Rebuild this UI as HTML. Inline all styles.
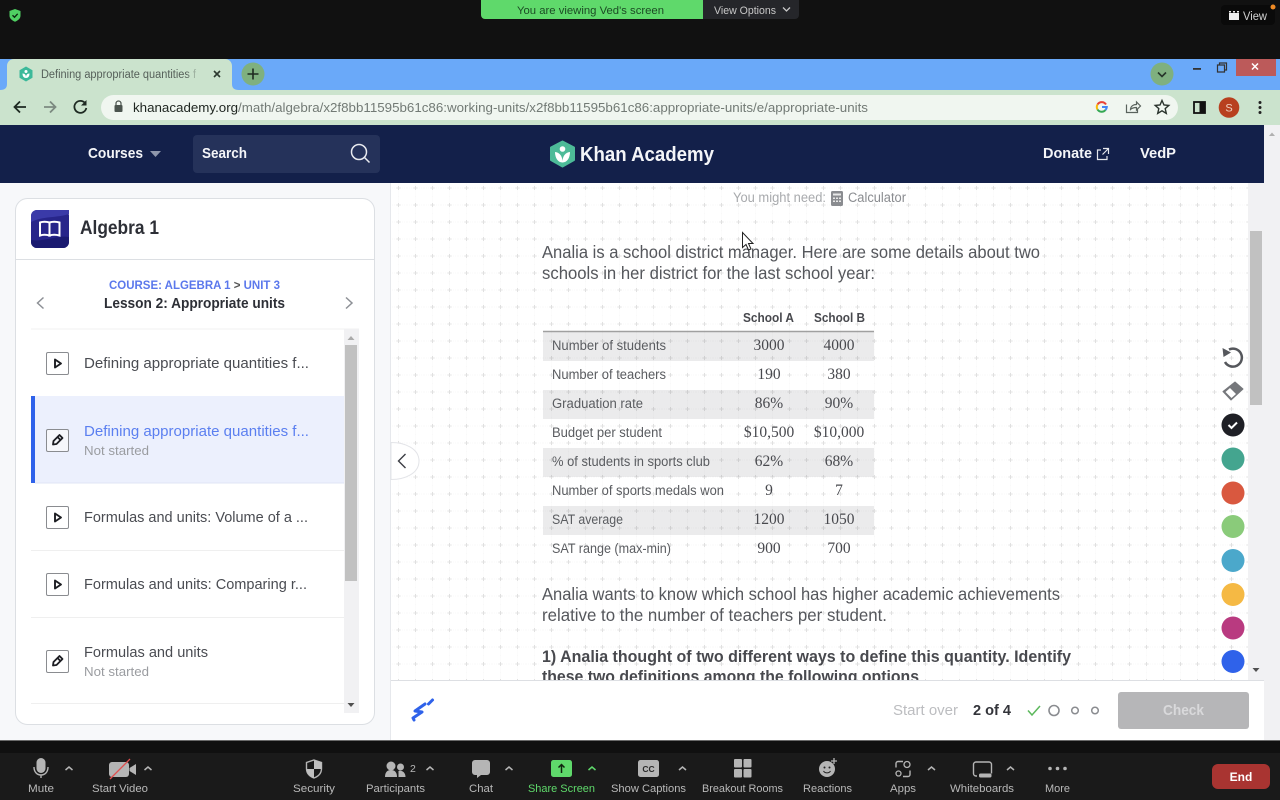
<!DOCTYPE html>
<html><head><meta charset="utf-8"><title>Khan Academy</title>
<style>
html,body{margin:0;padding:0;background:#111;width:1280px;height:800px;overflow:hidden}
svg{display:block;filter:blur(.35px)}
text{font-family:"Liberation Sans",sans-serif;white-space:pre}
.s{font-family:"Liberation Serif",serif}
.z{font-size:11px;fill:#b9b9b9}
.c{font-size:10px;fill:none;stroke:#b5b5b5;stroke-width:1.5}
.i{fill:none;stroke:#3a3c42;stroke-width:1.4}
</style></head><body>
<svg width="1280" height="800" viewBox="0 0 1280 800" xmlns="http://www.w3.org/2000/svg">
<defs>
<pattern id="g" x="390" y="179.5" width="17" height="17" patternUnits="userSpaceOnUse">
<path d="M0 8.500H17M8.500 0V17" stroke="#000" stroke-opacity=".025" stroke-width="1" stroke-dasharray="1 1"/>
<path d="M6.500 8.500H10.500M8.500 6.500V10.500" stroke="#000" stroke-opacity=".11" stroke-width="1"/>
</pattern>
<clipPath id="pc"><rect x="391" y="183" width="859" height="497"/></clipPath>
<linearGradient id="f" x1="0" x2="1"><stop offset="0" stop-color="#cbe3cd" stop-opacity="0"/><stop offset="1" stop-color="#cbe3cd"/></linearGradient>
</defs>

<!-- top zoom bar -->
<rect width="1280" height="59" fill="#111"/>
<path d="M15 9l5.500 2v4.500c0 3-2.400 5-5.500 6.200c-3.100-1.200-5.500-3.200-5.500-6.200V11z" fill="#4fd062"/>
<path d="M12.500 15.200l2 2 3.200-3.400" fill="none" stroke="#0b2a10" stroke-width="1.400"/>
<path d="M481 0H703V19H485a4 4 0 0 1-4-4z" fill="#5fd96b"/>
<text x="517" y="14" font-size="11" fill="#1c4a24" textLength="147" lengthAdjust="spacingAndGlyphs">You are viewing Ved's screen</text>
<path d="M703 0H799V15a4 4 0 0 1-4 4H703z" fill="#25262a"/>
<text x="714" y="14" font-size="11" fill="#c8c8c8" textLength="62" lengthAdjust="spacingAndGlyphs">View Options</text>
<path d="M783 7.500l3.500 3.500 3.500-3.500" fill="none" stroke="#c8c8c8" stroke-width="1.300"/>
<rect x="1221" y="5" width="54" height="20" rx="4" fill="#0a0a0a"/>
<path d="M1229 13h10v7h-10z" fill="#eee"/><path d="M1229 11h2v1.500h-2zM1233 11h2v1.500h-2zM1237 11h2v1.500h-2z" fill="#eee"/>
<text x="1243" y="20" font-size="11.500" fill="#d0d0d0" textLength="24" lengthAdjust="spacingAndGlyphs">View</text>
<circle cx="1273" cy="7" r="2.500" fill="#f08a24"/>

<!-- tab strip -->
<rect y="59" width="1280" height="31" fill="#6aa9f9"/>
<path d="M0 90c5 0 7-2 7-6V66c0-4 3-7 7-7H225c4 0 7 3 7 7v18c0 4 2 6 7 6z" fill="#cbe3cd"/>
<path d="M26 67l6 3.500v7L26 81l-6-3.500v-7z" fill="#3cb99a" stroke="#3cb99a" stroke-linejoin="round"/>
<circle cx="26" cy="71.500" r="1.500" fill="#fff"/><path d="M22.500 73.500c2.500 0 3.500 1.500 3.500 4c0-2.500 1-4 3.500-4c0 3-1.500 4.500-3.500 4.500s-3.500-1.500-3.500-4.500z" fill="#fff"/>
<text x="41" y="78" font-size="11.500" fill="#56605a" textLength="155" lengthAdjust="spacingAndGlyphs">Defining appropriate quantities f</text>
<rect x="186" y="66" width="14" height="16" fill="url(#f)"/>
<path d="M214 71l6 6M220 71l-6 6" stroke="#2d3a30" stroke-width="1.600"/>
<circle cx="253" cy="74" r="11.500" fill="#7fb07f"/>
<path d="M247.500 74h11M253 68.500v11" stroke="#1e2a20" stroke-width="1.600"/>
<circle cx="1162" cy="74" r="11.500" fill="#7fb07f"/>
<path d="M1158 72.500l4 4 4-4" fill="none" stroke="#26352a" stroke-width="1.600"/>
<rect x="1193" y="68" width="8" height="1.800" fill="#333"/>
<path d="M1217.500 65h7v7h-7zM1219.500 65v-2h7v7h-2" fill="none" stroke="#333" stroke-width="1.200"/>
<rect x="1236" y="59" width="40" height="17" fill="#bc5a5a"/>
<path d="M1252 63.500l6 6M1258 63.500l-6 6" stroke="#fff" stroke-width="1.500"/>

<!-- toolbar -->
<rect y="90" width="1280" height="35" fill="#cbe3cd"/>
<path d="M26 107H14.500M20 101.500L14.500 107l5.500 5.500" fill="none" stroke="#1e2a22" stroke-width="1.800"/>
<path d="M44 107h11.500M50 101.500l5.500 5.500-5.500 5.500" fill="none" stroke="#7c8a80" stroke-width="1.800"/>
<path d="M85 103a6 6 0 1 0 1.300 5" fill="none" stroke="#1e2a22" stroke-width="1.800"/><path d="M86.500 100v5.500H81z" fill="#1e2a22"/>
<rect x="101" y="95" width="1077" height="25" rx="12.500" fill="#f0f6f0"/>
<rect x="114.500" y="105" width="8" height="7" rx="1" fill="#4b544e"/><path d="M116 105v-1.500a2.500 2.500 0 0 1 5 0v1.500" fill="none" stroke="#4b544e" stroke-width="1.200"/>
<text x="133" y="112" font-size="13" fill="#727a75" textLength="735" lengthAdjust="spacingAndGlyphs"><tspan fill="#202722">khanacademy.org</tspan>/math/algebra/x2f8bb11595b61c86:working-units/x2f8bb11595b61c86:appropriate-units/e/appropriate-units</text>
<g fill="none" stroke-width="2">
<path d="M1106 104.500a5 5 0 0 0-8.500 0" stroke="#e94235"/><path d="M1097.500 104.500a5 5 0 0 0 0 5" stroke="#fabb05"/><path d="M1097.500 109.500a5 5 0 0 0 8 .5" stroke="#34a853"/><path d="M1105.500 110a5 5 0 0 0 1.300-3H1102" stroke="#4285f4"/>
</g>
<path d="M1126.500 104.500v8h11v-4M1130.500 109c.5-3 3-4.500 6-4.500v-2.500l4 4-4 4v-2.500c-2.500 0-4.500.5-6 2z" fill="none" stroke="#5a635d" stroke-width="1.200"/>
<path d="M1162 100.500l2 4.500 4.800.4-3.600 3.200 1.100 4.800-4.300-2.600-4.300 2.600 1.100-4.800-3.600-3.200 4.800-.4z" fill="none" stroke="#2a332d" stroke-width="1.400"/>
<rect x="1194" y="102" width="11" height="11" fill="none" stroke="#111" stroke-width="1.800"/><rect x="1199.500" y="102" width="5.500" height="11" fill="#111"/>
<circle cx="1229" cy="107.500" r="10.300" fill="#b8401f"/>
<text x="1229" y="111.500" font-size="11" fill="#f0d0c0" text-anchor="middle">S</text>
<circle cx="1260" cy="102.500" r="1.500" fill="#222"/><circle cx="1260" cy="107.500" r="1.500" fill="#222"/><circle cx="1260" cy="112.500" r="1.500" fill="#222"/>

<!-- page background -->
<rect y="125" width="1280" height="615" fill="#f7f8fa"/>
<rect x="1264" y="125" width="16" height="615" fill="#f1f1f3"/>
<path d="M1269 136l3-3.500 3 3.500z" fill="#b0b0b0"/>

<!-- KA nav -->
<rect y="125" width="1264" height="58" fill="#13204a"/>
<text x="88" y="158" font-size="15" font-weight="700" fill="#f4f5f8" textLength="55" lengthAdjust="spacingAndGlyphs">Courses</text>
<path d="M150 151h11l-5.500 6z" fill="#8f97ac"/>
<rect x="193" y="135" width="187" height="38" rx="4" fill="#25325a"/>
<text x="202" y="158" font-size="15" font-weight="700" fill="#f4f5f8" textLength="45" lengthAdjust="spacingAndGlyphs">Search</text>
<circle cx="359" cy="152" r="7.500" fill="none" stroke="#e9ebf0" stroke-width="1.500"/><path d="M364.500 157.500l5 5" stroke="#e9ebf0" stroke-width="1.500"/>
<path d="M562.500 141.500l11.500 6v12.500l-11.500 6.500-11.500-6.500V147.500z" fill="#4dbb98" stroke="#4dbb98" stroke-width="2" stroke-linejoin="round"/>
<circle cx="562.500" cy="149" r="2.800" fill="#fff"/>
<path d="M555 152c4 .5 7 3 7.500 9c.5-6 3.500-8.500 7.500-9c0 6-3 10.500-7.500 10.500S555 158 555 152z" fill="#fff"/>
<text x="580" y="161" font-size="20.500" font-weight="700" fill="#f4f5f8" textLength="134" lengthAdjust="spacingAndGlyphs">Khan Academy</text>
<text x="1043" y="158" font-size="15" font-weight="700" fill="#f4f5f8" textLength="49" lengthAdjust="spacingAndGlyphs">Donate</text>
<path d="M1101 150h-3.500v9.500h9.500V156M1103 148.500h5.500v5.500M1108.500 148.500l-6 6" fill="none" stroke="#e4e6ec" stroke-width="1.200"/>
<text x="1140" y="158" font-size="15" font-weight="700" fill="#f4f5f8" textLength="36" lengthAdjust="spacingAndGlyphs">VedP</text>

<!-- sidebar card -->
<rect x="15.500" y="198.500" width="359" height="526" rx="12" fill="#fff" stroke="#dcdfe3"/>
<path d="M16 259.500H374" stroke="#dcdfe3"/>
<rect x="31" y="210" width="38" height="38" rx="6" fill="#27258a"/>
<path d="M31 222c12-6 26-4 38-8v-4H37a6 6 0 0 0-6 6z" fill="#3a3aa8"/>
<path d="M31 240c14 2 26-5 38-3v5a6 6 0 0 1-6 6H37a6 6 0 0 1-6-6z" fill="#1a1a70"/>
<path d="M40 222.500c3-1 6-1 9.500 0v13c-3.500-1-6.500-1-9.500 0zM49.500 222.500c3-1 6.500-1 10 0v13c-3.500-1-7-1-10 0z" fill="#27258a" stroke="#fff" stroke-width="2"/>
<text x="80" y="234" font-size="19" font-weight="700" fill="#2d2f36" textLength="79" lengthAdjust="spacingAndGlyphs">Algebra 1</text>
<text x="109" y="289" font-size="11.500" font-weight="700" fill="#5b78ec" textLength="171" lengthAdjust="spacingAndGlyphs">COURSE: ALGEBRA 1 <tspan fill="#555">&gt;</tspan> UNIT 3</text>
<text x="104" y="308" font-size="14.500" font-weight="700" fill="#2d2f36" textLength="181" lengthAdjust="spacingAndGlyphs">Lesson 2: Appropriate units</text>
<path d="M43.500 297.500l-6 5.500 6 5.500M346 297.500l6 5.500-6 5.500" fill="none" stroke="#8d9096" stroke-width="1.500"/>

<path d="M31 329H359" stroke="#f2f2f2"/>
<rect x="344" y="329" width="15" height="384" fill="#f1f1f3"/>
<rect x="345" y="345" width="12" height="236" fill="#c1c1c1"/>
<path d="M347.500 340l3.500-4 3.500 4z" fill="#aaa"/><path d="M347.500 703h7l-3.500 4z" fill="#505050"/>

<rect x="31" y="396" width="313" height="87" fill="#ecf0fd"/>
<rect x="31" y="396" width="4" height="87" fill="#2f62ea"/>
<path d="M35 483H344" stroke="#dfe5f5"/>
<path d="M31 550.500H344M31 617.500H344M31 703.500H344" stroke="#efefef"/>

<g class="i">
<rect x="46.500" y="352.500" width="22" height="22" rx="1.500" fill="#fff" stroke="#8a8c90" stroke-width="1"/>
<rect x="46.500" y="429.500" width="22" height="22" rx="1.500" fill="#f6f7fb" stroke="#8a8c90" stroke-width="1"/>
<rect x="46.500" y="506.500" width="22" height="22" rx="1.500" fill="#fff" stroke="#8a8c90" stroke-width="1"/>
<rect x="46.500" y="573.500" width="22" height="22" rx="1.500" fill="#fff" stroke="#8a8c90" stroke-width="1"/>
<rect x="46.500" y="650.500" width="22" height="22" rx="1.500" fill="#fff" stroke="#8a8c90" stroke-width="1"/>
</g>
<g fill="none" stroke="#1c1d22" stroke-width="1.900" stroke-linejoin="round">
<path d="M55 359.500l6 4-6 4z"/><path d="M55 513.500l6 4-6 4z"/><path d="M55 580.500l6 4-6 4z"/>
</g>
<g fill="none" stroke="#1c1d22" stroke-width="1.800" stroke-linejoin="round">
<path d="M53.500 441l6-6 3 3-6 6-3.500.5z"/><path d="M57.500 437l3 3"/>
<path d="M53.500 662l6-6 3 3-6 6-3.500.5z"/><path d="M57.500 658l3 3"/>
</g>
<g font-size="15" fill="#4a4c52">
<text x="84" y="368" textLength="225" lengthAdjust="spacingAndGlyphs">Defining appropriate quantities f...</text>
<text x="84" y="436" textLength="225" lengthAdjust="spacingAndGlyphs" fill="#5b7ff0">Defining appropriate quantities f...</text>
<text x="84" y="522" textLength="224" lengthAdjust="spacingAndGlyphs">Formulas and units: Volume of a ...</text>
<text x="84" y="589" textLength="223" lengthAdjust="spacingAndGlyphs">Formulas and units: Comparing r...</text>
<text x="84" y="657" textLength="124" lengthAdjust="spacingAndGlyphs">Formulas and units</text>
</g>
<text x="84" y="455" font-size="13" fill="#9a9ca0" textLength="65" lengthAdjust="spacingAndGlyphs">Not started</text>
<text x="84" y="676" font-size="13" fill="#9a9ca0" textLength="65" lengthAdjust="spacingAndGlyphs">Not started</text>

<!-- content -->
<rect x="391" y="183" width="859" height="497" fill="#fff"/>
<g fill="#ebebec"><rect x="543" y="332" width="331" height="29"/><rect x="543" y="390" width="331" height="29"/><rect x="543" y="448" width="331" height="29"/><rect x="543" y="506" width="331" height="29"/></g>
<rect x="391" y="183" width="857" height="497" fill="url(#g)"/>
<path d="M390.500 183V740" stroke="#e6e8ec"/>
<rect x="1248" y="183" width="16" height="497" fill="#f1f1f3"/>
<rect x="1250" y="231" width="12" height="174" fill="#c1c1c1"/>
<path d="M1252.500 668h7l-3.500 4z" fill="#505050"/>

<g clip-path="url(#pc)">
<text x="733" y="202" font-size="13.500" fill="#a8aaad" textLength="93" lengthAdjust="spacingAndGlyphs">You might need:</text>
<rect x="831" y="191" width="12" height="15" rx="1.500" fill="#8a8c90"/>
<path d="M833 193.500h8v2h-8zM833 197.500h2v1.500h-2zM836 197.500h2v1.500h-2zM839 197.500h2v1.500h-2zM833 200.500h2v1.500h-2zM836 200.500h2v1.500h-2zM839 200.500h2v1.500h-2z" fill="#e8e8e8"/>
<text x="848" y="202" font-size="13.500" fill="#8a8c90" textLength="58" lengthAdjust="spacingAndGlyphs">Calculator</text>

<g font-size="17.500" fill="#55575c">
<text x="542" y="258" textLength="498" lengthAdjust="spacingAndGlyphs">Analia is a school district manager. Here are some details about two</text>
<text x="542" y="279" textLength="333" lengthAdjust="spacingAndGlyphs">schools in her district for the last school year:</text>
<text x="542" y="600" textLength="518" lengthAdjust="spacingAndGlyphs">Analia wants to know which school has higher academic achievements</text>
<text x="542" y="621" textLength="345" lengthAdjust="spacingAndGlyphs">relative to the number of teachers per student.</text>
</g>
<g font-size="17" font-weight="700" fill="#48494e">
<text x="542" y="662" textLength="529" lengthAdjust="spacingAndGlyphs">1) Analia thought of two different ways to define this quantity. Identify</text>
<text x="542" y="682" textLength="377" lengthAdjust="spacingAndGlyphs">these two definitions among the following options</text>
</g>

<text x="743" y="322" font-size="13" font-weight="700" fill="#48494e" textLength="51" lengthAdjust="spacingAndGlyphs">School A</text>
<text x="814" y="322" font-size="13" font-weight="700" fill="#48494e" textLength="51" lengthAdjust="spacingAndGlyphs">School B</text>
<path d="M543 331.500H874" stroke="#a0a0a0" stroke-width="1.500"/>
<g font-size="13.500" fill="#5a5c60">
<text x="552" y="350" textLength="114" lengthAdjust="spacingAndGlyphs">Number of students</text>
<text x="552" y="379" textLength="114" lengthAdjust="spacingAndGlyphs">Number of teachers</text>
<text x="552" y="408" textLength="91" lengthAdjust="spacingAndGlyphs">Graduation rate</text>
<text x="552" y="437" textLength="110" lengthAdjust="spacingAndGlyphs">Budget per student</text>
<text x="552" y="466" textLength="158" lengthAdjust="spacingAndGlyphs">% of students in sports club</text>
<text x="552" y="495" textLength="172" lengthAdjust="spacingAndGlyphs">Number of sports medals won</text>
<text x="552" y="524" textLength="71" lengthAdjust="spacingAndGlyphs">SAT average</text>
<text x="552" y="553" textLength="119" lengthAdjust="spacingAndGlyphs">SAT range (max-min)</text>
</g>
<g class="s" font-size="15.500" fill="#48494e" text-anchor="middle">
<text class="s" x="769" y="350">3000</text><text class="s" x="839" y="350">4000</text>
<text class="s" x="769" y="379">190</text><text class="s" x="839" y="379">380</text>
<text class="s" x="769" y="408">86%</text><text class="s" x="839" y="408">90%</text>
<text class="s" x="769" y="437">$10,500</text><text class="s" x="839" y="437">$10,000</text>
<text class="s" x="769" y="466">62%</text><text class="s" x="839" y="466">68%</text>
<text class="s" x="769" y="495">9</text><text class="s" x="839" y="495">7</text>
<text class="s" x="769" y="524">1200</text><text class="s" x="839" y="524">1050</text>
<text class="s" x="769" y="553">900</text><text class="s" x="839" y="553">700</text>
</g>
</g>

<!-- cursor -->
<path d="M742.500 232.500v15l3.500-3 2.500 5.500 2.500-1-2.500-5.500h4.500z" fill="#fff" stroke="#222" stroke-width="1"/>

<!-- tools -->
<path d="M1229 349.500A9 9 0 1 1 1225 362" fill="none" stroke="#55575c" stroke-width="2.500"/>
<path d="M1222.500 348l1 9 7.500-4.500z" fill="#55575c"/>
<path d="M1223 391.500l12-9.500 8 7-12 11z" fill="#75777b" stroke="#75777b" stroke-linejoin="round"/>
<path d="M1225.500 392l4.500-4 6 6-4.500 4z" fill="#fff"/>
<circle cx="1233" cy="425" r="11.500" fill="#1f2026"/>
<path d="M1228.500 425l3 3 5.500-5.500" fill="none" stroke="#fff" stroke-width="2"/>
<circle cx="1233" cy="459" r="11.500" fill="#44a58f"/>
<circle cx="1233" cy="493" r="11.500" fill="#d9583f"/>
<circle cx="1233" cy="526.500" r="11.500" fill="#8acb7a"/>
<circle cx="1233" cy="560.500" r="11.500" fill="#4ba8cb"/>
<circle cx="1233" cy="594.500" r="11.500" fill="#f5b944"/>
<circle cx="1233" cy="628" r="11.500" fill="#b93a80"/>
<circle cx="1233" cy="661.500" r="11.500" fill="#2f62ea"/>

<!-- collapse -->
<path d="M391 442.500c14 0 28 6 28 18.500s-14 18.500-28 18.500z" fill="#fff" stroke="#e3e4e8"/>
<path d="M405.500 454l-7 7 7 7" fill="none" stroke="#3a3c42" stroke-width="1.400"/>

<!-- footer -->
<rect x="391" y="680" width="873" height="60" fill="#fff"/>
<path d="M391 680.500H1264" stroke="#dddfe3"/>
<path d="M414 720l-1-2 9-6-7-1 10-7" fill="none" stroke="#2f62ea" stroke-width="3" stroke-linecap="round" stroke-linejoin="round"/>
<path d="M428.500 704l4-4" stroke="#2f62ea" stroke-width="3" stroke-linecap="round"/>
<text x="893" y="715" font-size="15" font-weight="400" fill="#bcbdc0" textLength="65" lengthAdjust="spacingAndGlyphs">Start over</text>
<text x="973" y="715" font-size="15" font-weight="700" fill="#33343a" textLength="38" lengthAdjust="spacingAndGlyphs">2 of 4</text>
<path d="M1028 710.500l4 4.500 8-9" fill="none" stroke="#5cb85c" stroke-width="1.500"/>
<circle cx="1054" cy="710.500" r="5" fill="none" stroke="#8a8c90" stroke-width="1.600"/>
<circle cx="1075" cy="710.500" r="3.300" fill="none" stroke="#8a8c90" stroke-width="1.500"/>
<circle cx="1095" cy="710.500" r="3.300" fill="none" stroke="#8a8c90" stroke-width="1.500"/>
<rect x="1118" y="692" width="131" height="37" rx="3" fill="#b6b6b8"/>
<text x="1163" y="715" font-size="15" font-weight="700" fill="#d9d9db" textLength="41" lengthAdjust="spacingAndGlyphs">Check</text>

<!-- zoom toolbar -->
<rect y="740" width="1280" height="60" fill="#1a1a1a"/>
<rect y="741" width="1280" height="12" fill="#101010"/>
<rect y="740" width="1280" height="1" fill="#6a6a6a"/>

<rect x="36.500" y="758" width="9" height="15" rx="4.500" fill="#b5b5b5"/>
<path d="M34 767c0 5 3 8 7 8s7-3 7-8M41 775v3" fill="none" stroke="#b5b5b5" stroke-width="1.400"/>
<path d="M65.500 770l3.500-3 3.500 3" class="c"/>
<text class="z" x="28" y="792" textLength="26" lengthAdjust="spacingAndGlyphs">Mute</text>

<rect x="109" y="762" width="20" height="15" rx="3" fill="#b5b5b5"/>
<path d="M129.500 768l6.500-4v11l-6.500-4z" fill="#b5b5b5"/>
<path d="M110 779l20-20" stroke="#e05050" stroke-width="1.300"/>
<path d="M144.500 770l3.500-3 3.500 3" class="c"/>
<text class="z" x="92" y="792" textLength="56" lengthAdjust="spacingAndGlyphs">Start Video</text>

<path d="M314 760l7.500 2.500v6c0 5-3.500 8-7.500 9.500c-4-1.500-7.500-4.500-7.500-9.500v-6z" fill="#1a1a1a" stroke="#b5b5b5" stroke-width="1.400"/>
<path d="M314 760l7.500 2.500v6.500H314zM314 769v9c-4-1.500-7.500-4.500-7.500-9z" fill="#c0c0c0"/>
<text class="z" x="293" y="792" textLength="42" lengthAdjust="spacingAndGlyphs">Security</text>

<circle cx="391" cy="766" r="4.500" fill="#b5b5b5"/><path d="M385 777c0-5 2.500-7 6-7s6 2 6 7z" fill="#b5b5b5"/>
<circle cx="400.500" cy="767" r="3.500" fill="#b5b5b5"/><path d="M398.500 771c3-1 7 1 7 6h-7z" fill="#b5b5b5"/>
<text x="410" y="772" font-size="10.500" fill="#b9b9b9">2</text>
<path d="M426.500 770l3.500-3 3.500 3" class="c"/>
<text class="z" x="366" y="792" textLength="59" lengthAdjust="spacingAndGlyphs">Participants</text>

<path d="M475 760h12a3 3 0 0 1 3 3v9a3 3 0 0 1-3 3h-6l-4 3v-3h-2a3 3 0 0 1-3-3v-9a3 3 0 0 1 3-3z" fill="#b5b5b5"/>
<path d="M505.500 770l3.500-3 3.500 3" class="c"/>
<text class="z" x="469" y="792" textLength="24" lengthAdjust="spacingAndGlyphs">Chat</text>

<rect x="551" y="760" width="21" height="17" rx="2.500" fill="#5fd96b"/>
<path d="M561.500 773v-8M558.500 767.500l3-3 3 3" fill="none" stroke="#10240f" stroke-width="1.500"/>
<path d="M588.500 770l3.500-3 3.500 3" class="c" style="stroke:#5fd96b"/>
<text class="z" x="528" y="792" textLength="67" lengthAdjust="spacingAndGlyphs" style="fill:#5fd96b">Share Screen</text>

<rect x="638" y="760" width="21" height="17" rx="2.500" fill="#b5b5b5"/>
<text x="648.500" y="772" font-size="8.500" font-weight="700" fill="#2a2a2a" text-anchor="middle">CC</text>
<path d="M679 770l3.500-3 3.500 3" class="c"/>
<text class="z" x="611" y="792" textLength="75" lengthAdjust="spacingAndGlyphs">Show Captions</text>

<g fill="#b5b5b5"><rect x="734" y="759" width="8" height="8.500" rx="1"/><rect x="743.500" y="759" width="8" height="8.500" rx="1"/><rect x="734" y="769" width="8" height="8.500" rx="1"/><rect x="743.500" y="769" width="8" height="8.500" rx="1"/></g>
<text class="z" x="702" y="792" textLength="81" lengthAdjust="spacingAndGlyphs">Breakout Rooms</text>

<circle cx="827" cy="769" r="8" fill="#b5b5b5"/>
<circle cx="824.500" cy="767.500" r="1" fill="#222"/><circle cx="829.500" cy="767.500" r="1" fill="#222"/>
<path d="M823.500 771c1.500 2.500 5.500 2.500 7 0" fill="none" stroke="#222" stroke-width="1.100"/>
<path d="M834 758v6M831 761h6" stroke="#b5b5b5" stroke-width="1.300"/>
<text class="z" x="803" y="792" textLength="49" lengthAdjust="spacingAndGlyphs">Reactions</text>

<path d="M903 761.500h-5a2 2 0 0 0-2 2v4M910 770.500v4a2 2 0 0 1-2 2h-5" fill="none" stroke="#b5b5b5" stroke-width="1.400"/>
<circle cx="907" cy="764.500" r="3" fill="none" stroke="#b5b5b5" stroke-width="1.300"/>
<circle cx="898.500" cy="773.500" r="2.500" fill="none" stroke="#b5b5b5" stroke-width="1.300"/>
<path d="M928 770l3.500-3 3.500 3" class="c"/>
<text class="z" x="890" y="792" textLength="26" lengthAdjust="spacingAndGlyphs">Apps</text>

<path d="M977 776h-1a2.500 2.500 0 0 1-2.500-2.500v-9a2.500 2.500 0 0 1 2.500-2.500h13a2.500 2.500 0 0 1 2.500 2.500v9" fill="none" stroke="#b5b5b5" stroke-width="1.400"/>
<rect x="979" y="773.500" width="12.500" height="4" rx="1.500" fill="#b5b5b5"/>
<path d="M1007 770l3.500-3 3.500 3" class="c"/>
<text class="z" x="950" y="792" textLength="64" lengthAdjust="spacingAndGlyphs">Whiteboards</text>

<circle cx="1050" cy="768.500" r="1.800" fill="#b5b5b5"/><circle cx="1057.500" cy="768.500" r="1.800" fill="#b5b5b5"/><circle cx="1065" cy="768.500" r="1.800" fill="#b5b5b5"/>
<text class="z" x="1045" y="792" textLength="25" lengthAdjust="spacingAndGlyphs">More</text>

<rect x="1212" y="764" width="58" height="25" rx="6" fill="#a93431"/>
<text x="1241" y="781" font-size="12" font-weight="700" fill="#fff" text-anchor="middle">End</text>
</svg>
</body></html>
